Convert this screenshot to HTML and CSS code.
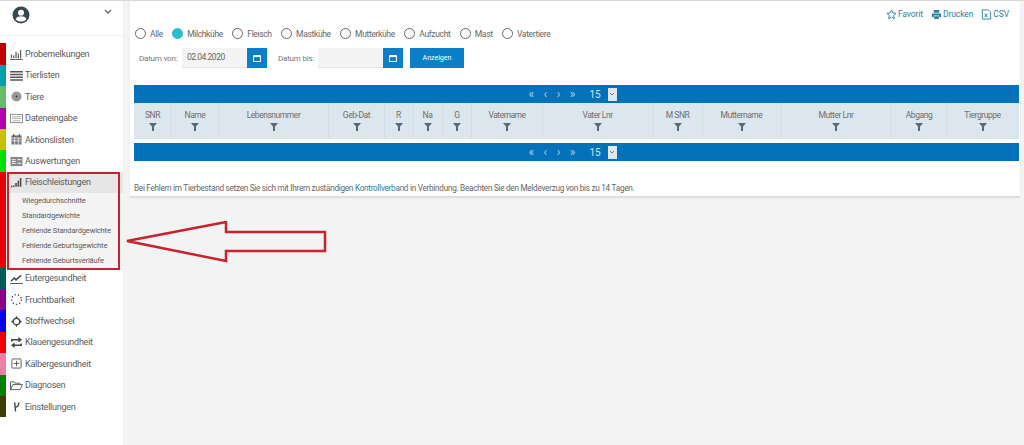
FILE: index.html
```html
<!DOCTYPE html>
<html lang="de">
<head>
<meta charset="utf-8">
<title>Fleischleistungen</title>
<link rel="stylesheet" href="styles.css">
</head>
<body>
<div class="app">
  <aside class="sidebar">
    <div class="profile">
      <svg class="avatar" viewBox="0 0 18 18"><circle cx="9" cy="9" r="8.5" fill="#37474f"/><circle cx="9" cy="6.8" r="3" fill="#fff"/><path d="M3.6 13.2c1-2.4 3.2-3 5.4-3s4.400.6 5.400 3c-1.300 1.500-3.200 2.400-5.400 2.400s-4.100-.9-5.400-2.400z" fill="#fff"/></svg>
      <svg class="chevron" viewBox="0 0 8 5"><path d="M1 1l3 3 3-3" fill="none" stroke="#666" stroke-width="1.300"/></svg>
    </div>
    <nav class="menu">
      <a class="item c1"><svg class="ico" viewBox="0 0 14 12"><path d="M0 11.500h14M1.500 10V6M4 10V7M6.500 10V3M9 10V5M11.500 10V1" stroke="#666" fill="none" stroke-width="1.400"/></svg>Probemelkungen</a>
      <a class="item c2"><svg class="ico" viewBox="0 0 14 12"><path d="M0 2h14M0 5h14M0 8h14M0 11h14" stroke="#555" fill="none" stroke-width="1.700"/></svg>Tierlisten</a>
      <a class="item c3"><svg class="ico" viewBox="0 0 14 12"><circle cx="7" cy="6" r="5.500" fill="#999"/><circle cx="7" cy="6" r="1" fill="#333"/></svg>Tiere</a>
      <a class="item c4"><svg class="ico" viewBox="0 0 14 12"><rect x=".5" y="1.500" width="13" height="9" fill="none" stroke="#888"/><path d="M2 4h10M2 6h10M3 8.500h8" stroke="#aaa"/></svg>Dateneingabe</a>
      <a class="item c5"><svg class="ico" viewBox="0 0 14 12"><rect x="1.500" y="1.500" width="11" height="10" fill="#777"/><path d="M4 0v3M10 0v3" stroke="#333"/><path d="M2 4.500h10M2 7.500h10M5 4v8M9 4v8" stroke="#fff" stroke-width=".8"/></svg>Aktionslisten</a>
      <a class="item c6"><svg class="ico" viewBox="0 0 14 12"><rect x=".5" y="1" width="13" height="10" fill="#888"/><path d="M2 4h4M2 6h4M2 8h4M8 4h4M8 8h4" stroke="#fff"/></svg>Auswertungen</a>
      <div class="group c7">
        <a class="item head"><svg class="ico" viewBox="0 0 14 12"><path d="M1 10.500h1.500M4 10.500V9M6.500 10.500V6.500M9 10.500V4M11.500 10.500V1" stroke="#555" fill="none" stroke-width="1.800"/></svg>Fleischleistungen</a>
        <a class="sub">Wiegedurchschnitte</a>
        <a class="sub">Standardgewichte</a>
        <a class="sub">Fehlende Standardgewichte</a>
        <a class="sub">Fehlende Geburtsgewichte</a>
        <a class="sub">Fehlende Geburtsverläufe</a>
      </div>
      <a class="item c8"><svg class="ico" viewBox="0 0 14 12"><path d="M0 11.500h14" stroke="#444"/><path d="M1 9l3.500-3.500 2 2L12 2.500" fill="none" stroke="#444" stroke-width="1.600"/></svg>Eutergesundheit</a>
      <a class="item c9"><svg class="ico" viewBox="0 0 14 12"><circle cx="7" cy="6" r="5.300" fill="none" stroke="#444" stroke-width="1.400" stroke-dasharray="1.500 2.200"/></svg>Fruchtbarkeit</a>
      <a class="item c10"><svg class="ico" viewBox="0 0 14 12"><circle cx="7" cy="6" r="3.500" fill="none" stroke="#444" stroke-width="1.400"/><path d="M7 0l1.500 2h-3zM7 12l1.500-2h-3zM1 6l2-1.500v3zM13 6l-2-1.500v3z" fill="#333"/></svg>Stoffwechsel</a>
      <a class="item c11"><svg class="ico" viewBox="0 0 14 12"><path d="M2 5V3h8M12 7v2H4" fill="none" stroke="#444" stroke-width="1.800"/><path d="M9 0l4 3-4 3zM5 6L1 9l4 3z" fill="#444"/></svg>Klauengesundheit</a>
      <a class="item c12"><svg class="ico" viewBox="0 0 14 12"><rect x="2" y="1" width="10" height="10" rx="1" fill="none" stroke="#555"/><path d="M7 3v6M4 6h6" stroke="#555"/></svg>Kälbergesundheit</a>
      <a class="item c13"><svg class="ico" viewBox="0 0 14 12"><path d="M.5 10.500V2h4l1 1.500h5V5M.5 10.500L3 5h10.500l-2.500 5.500z" fill="none" stroke="#555"/></svg>Diagnosen</a>
      <a class="item c14"><svg class="ico" viewBox="0 0 14 12"><path d="M5 1.500l1 10M5.500 6.500c3 0 4-2 4-5" fill="none" stroke="#444" stroke-width="1.500"/></svg>Einstellungen</a>
    </nav>
  </aside>
  <main class="content">
    <section class="card">
      <div class="links">
        <a class="link"><svg class="lico" viewBox="0 0 12 12"><path d="M6 1l1.500 3.300 3.500.4-2.600 2.400.7 3.500L6 8.800l-3.100 1.800.7-3.500L1 4.700l3.500-.4z" fill="none" stroke="#2b7f9e"/></svg>Favorit</a>
        <a class="link"><svg class="lico" viewBox="0 0 12 12"><path d="M3 1h6v3H3zM1 5h10v4H9V7H3v2H1zM3.500 8h5v3h-5z" fill="#2b7f9e"/></svg>Drucken</a>
        <a class="link"><svg class="lico" viewBox="0 0 12 12"><path d="M1.500 1h6.500l2.500 2.500V11h-9z" fill="none" stroke="#2b7f9e"/><path d="M4 5l3 4M7 5L4 9" stroke="#2b7f9e"/></svg>CSV</a>
      </div>
      <div class="radios">
        <label class="radio"><i class="dot"></i>Alle</label>
        <label class="radio"><i class="dot on"></i>Milchkühe</label>
        <label class="radio"><i class="dot"></i>Fleisch</label>
        <label class="radio"><i class="dot"></i>Mastkühe</label>
        <label class="radio"><i class="dot"></i>Mutterkühe</label>
        <label class="radio"><i class="dot"></i>Aufzucht</label>
        <label class="radio"><i class="dot"></i>Mast</label>
        <label class="radio"><i class="dot"></i>Vatertiere</label>
      </div>
      <div class="dates">
        <span class="dlabel">Datum von:</span>
        <span class="input">02.04.2020</span>
        <span class="calbtn"><svg class="cal" viewBox="0 0 8 8"><path d="M.5 1.500h7v6h-7z" fill="none" stroke="#fff"/><path d="M.5 2.500h7" stroke="#fff" stroke-width="1.200"/></svg></span>
        <span class="dlabel second">Datum bis:</span>
        <span class="input"></span>
        <span class="calbtn"><svg class="cal" viewBox="0 0 8 8"><path d="M.5 1.500h7v6h-7z" fill="none" stroke="#fff"/><path d="M.5 2.500h7" stroke="#fff" stroke-width="1.200"/></svg></span>
        <span class="show">Anzeigen</span>
      </div>
      <div class="pager first">
        <span class="arrows"><span>«</span><span>‹</span><span>›</span><span>»</span></span>
        <span class="num">15</span><span class="sel"><svg viewBox="0 0 6 4"><path d="M1 1l2 2 2-2" fill="none" stroke="#777"/></svg></span>
      </div>
      <div class="thead">
        <div class="th">SNR<svg class="fil" viewBox="0 0 8 8"><path d="M0 0h8L5 3.500V8H3V3.500z"/></svg></div>
        <div class="th">Name<svg class="fil" viewBox="0 0 8 8"><path d="M0 0h8L5 3.500V8H3V3.500z"/></svg></div>
        <div class="th">Lebensnummer<svg class="fil" viewBox="0 0 8 8"><path d="M0 0h8L5 3.500V8H3V3.500z"/></svg></div>
        <div class="th">Geb-Dat<svg class="fil" viewBox="0 0 8 8"><path d="M0 0h8L5 3.500V8H3V3.500z"/></svg></div>
        <div class="th">R<svg class="fil" viewBox="0 0 8 8"><path d="M0 0h8L5 3.500V8H3V3.500z"/></svg></div>
        <div class="th">Na<svg class="fil" viewBox="0 0 8 8"><path d="M0 0h8L5 3.500V8H3V3.500z"/></svg></div>
        <div class="th">G<svg class="fil" viewBox="0 0 8 8"><path d="M0 0h8L5 3.500V8H3V3.500z"/></svg></div>
        <div class="th">Vatername<svg class="fil" viewBox="0 0 8 8"><path d="M0 0h8L5 3.500V8H3V3.500z"/></svg></div>
        <div class="th">Vater Lnr<svg class="fil" viewBox="0 0 8 8"><path d="M0 0h8L5 3.500V8H3V3.500z"/></svg></div>
        <div class="th">M SNR<svg class="fil" viewBox="0 0 8 8"><path d="M0 0h8L5 3.500V8H3V3.500z"/></svg></div>
        <div class="th">Muttername<svg class="fil" viewBox="0 0 8 8"><path d="M0 0h8L5 3.500V8H3V3.500z"/></svg></div>
        <div class="th">Mutter Lnr<svg class="fil" viewBox="0 0 8 8"><path d="M0 0h8L5 3.500V8H3V3.500z"/></svg></div>
        <div class="th">Abgang<svg class="fil" viewBox="0 0 8 8"><path d="M0 0h8L5 3.500V8H3V3.500z"/></svg></div>
        <div class="th">Tiergruppe<svg class="fil" viewBox="0 0 8 8"><path d="M0 0h8L5 3.500V8H3V3.500z"/></svg></div>
      </div>
      <div class="pager second">
        <span class="arrows"><span>«</span><span>‹</span><span>›</span><span>»</span></span>
        <span class="num">15</span><span class="sel"><svg viewBox="0 0 6 4"><path d="M1 1l2 2 2-2" fill="none" stroke="#777"/></svg></span>
      </div>
      <p class="note">Bei Fehlern im Tierbestand setzen Sie sich mit Ihrem zuständigen <a class="nlink">Kontrollverband</a> in Verbindung. Beachten Sie den Meldeverzug von bis zu 14 Tagen.</p>
    </section>
  </main>
</div>
<div class="redbox"></div>
<svg class="arrow" viewBox="0 0 204 42"><path d="M2 20L101 1v10h99v19h-99v10z" fill="none" stroke="#c9222f" stroke-width="2.500"/></svg>
</body>
</html>
```
FILE: styles.css
```css
* { box-sizing: border-box; }
html, body { margin: 0; height: 445px; overflow: hidden; }
body { background: #f3f3f3; font-family: Roboto, "Liberation Sans", sans-serif; color: #666; font-size: 9px; }
.app { display: flex; height: 445px; border-top: 1px solid #d8d8d8; }
.sidebar { width: 123px; background: #fff; flex: none; }
.profile { height: 35px; border-bottom: 1px solid #f0f0f0; display: flex; justify-content: space-between; padding: 5px 11px 0 12px; align-items: flex-start; }
.avatar { width: 18px; height: 18px; }
.chevron { width: 8px; height: 5px; margin-top: 3px; }
.menu { padding-top: 7.400px; }
.item { display: flex; align-items: center; height: 21.400px; border-left: 6px solid transparent; padding-left: 4px; font-size: 9px; letter-spacing: -.25px; color: #5a5a5a; white-space: nowrap; }
.ico { width: 13px; height: 11px; margin-right: 2px; flex: none; }
.c1 { border-left-color: #c00000; }
.c2 { border-left-color: #00a0a8; }
.c3 { border-left-color: #66bb6a; }
.c4 { border-left-color: #b000b0; }
.c5 { border-left-color: #c8c000; }
.c6 { border-left-color: #00e000; }
.c7 { border-left: 6px solid #e80000; }
.c8 { border-left-color: #005a5a; }
.c9 { border-left-color: #8a008a; }
.c10 { border-left-color: #0000ee; }
.c11 { border-left-color: #f00000; }
.c12 { border-left-color: #f080a8; }
.c13 { border-left-color: #008000; }
.c14 { border-left-color: #3d3d00; }
.group { background: #f4f4f4; }
.head { background: #e6e6e6; border-left: 0; padding-left: 4px; }
.sub { display: flex; align-items: center; height: 14.900px; padding-left: 16px; font-size: 7.500px; letter-spacing: -.15px; color: #5a5a5a; white-space: nowrap; }
.content { flex: 1; padding: 0 4px 0 7px; }
.card { background: #fff; height: 196px; padding: 0 1px 0 4px; border-bottom: 1px solid #ddd; box-shadow: 0 1px 1px #e0e0e0; }
.links { height: 27px; display: flex; justify-content: flex-end; align-items: center; gap: 8px; padding: 0 10px 1px 0; color: #2b7f9e; }
.link { display: flex; align-items: center; gap: 1px; font-size: 8.500px; letter-spacing: -.1px; color: #2b7f9e; }
.lico { width: 11px; height: 11px; }
.radios { display: flex; align-items: center; height: 11px; padding-left: 1px; font-size: 8.500px; letter-spacing: -.35px; color: #666; }
.radio { display: flex; align-items: center; gap: 4px; margin-right: 9.400px; }
.dot { display: block; width: 11px; height: 11px; border: 1.200px solid #666; border-radius: 50%; }
.dot.on { background: #2cbcd0; border-color: #2cbcd0; }
.dates { display: flex; align-items: center; height: 20px; margin-top: 9px; padding-left: 5px; font-size: 8px; letter-spacing: -.2px; white-space: nowrap; }
.dlabel { width: 43px; color: #777; }
.dlabel.second { width: 40px; margin-left: 11px; }
.input { width: 65px; height: 20px; background: #f4f4f4; border-bottom: 1px solid #e4e4e4; padding: 3px 0 0 5px; font-size: 8.500px; letter-spacing: -.5px; line-height: 12px; color: #666; }
.calbtn { width: 20px; height: 20px; background: #0b7fc7; display: flex; align-items: center; justify-content: center; }
.cal { width: 8px; height: 8px; }
.show { margin-left: 7px; width: 54px; height: 20px; background: #0b7fc7; color: #fff; font-size: 7px; letter-spacing: 0; display: flex; align-items: center; justify-content: center; }
.pager { height: 18px; background: #0472bb; display: flex; align-items: center; justify-content: center; color: #fff; padding-right: 8px; }
.pager.first { margin-top: 17px; }
.pager.second { margin-top: 4px; }
.arrows { display: flex; width: 47px; justify-content: space-between; color: #a8d0ea; font-size: 12px; margin-right: 14px; }
.num { font-size: 10px; color: #cfe4f2; }
.sel { width: 9px; height: 13px; background: #dfe6ec; margin-left: 7px; display: flex; align-items: center; justify-content: center; }
.sel svg { width: 6px; height: 4px; }
.thead { display: grid; grid-template-columns: 38px 47px 110px 56px 28px 30px 29px 71px 110px 50px 78px 111px 55px 71px; height: 36px; background: #dce6ee; }
.th { border-right: 1px solid #d2dde6; display: flex; flex-direction: column; align-items: center; padding-top: 6px; font-size: 8.500px; letter-spacing: -.45px; color: #6e6e6e; line-height: 12px; }
.th:last-child { border-right: 0; }
.fil { width: 8px; height: 8px; margin-top: 2px; fill: #5a6a75; }
.note { margin: 21px 0 0; font-size: 8.200px; letter-spacing: -.275px; color: #666; white-space: nowrap; line-height: 12px; }
.nlink { color: #2b7f9e; }
.redbox { position: absolute; left: 7px; top: 172px; width: 113px; height: 98px; border: 2px solid #c9222f; }
.arrow { position: absolute; left: 125px; top: 221px; width: 204px; height: 42px; }
```
